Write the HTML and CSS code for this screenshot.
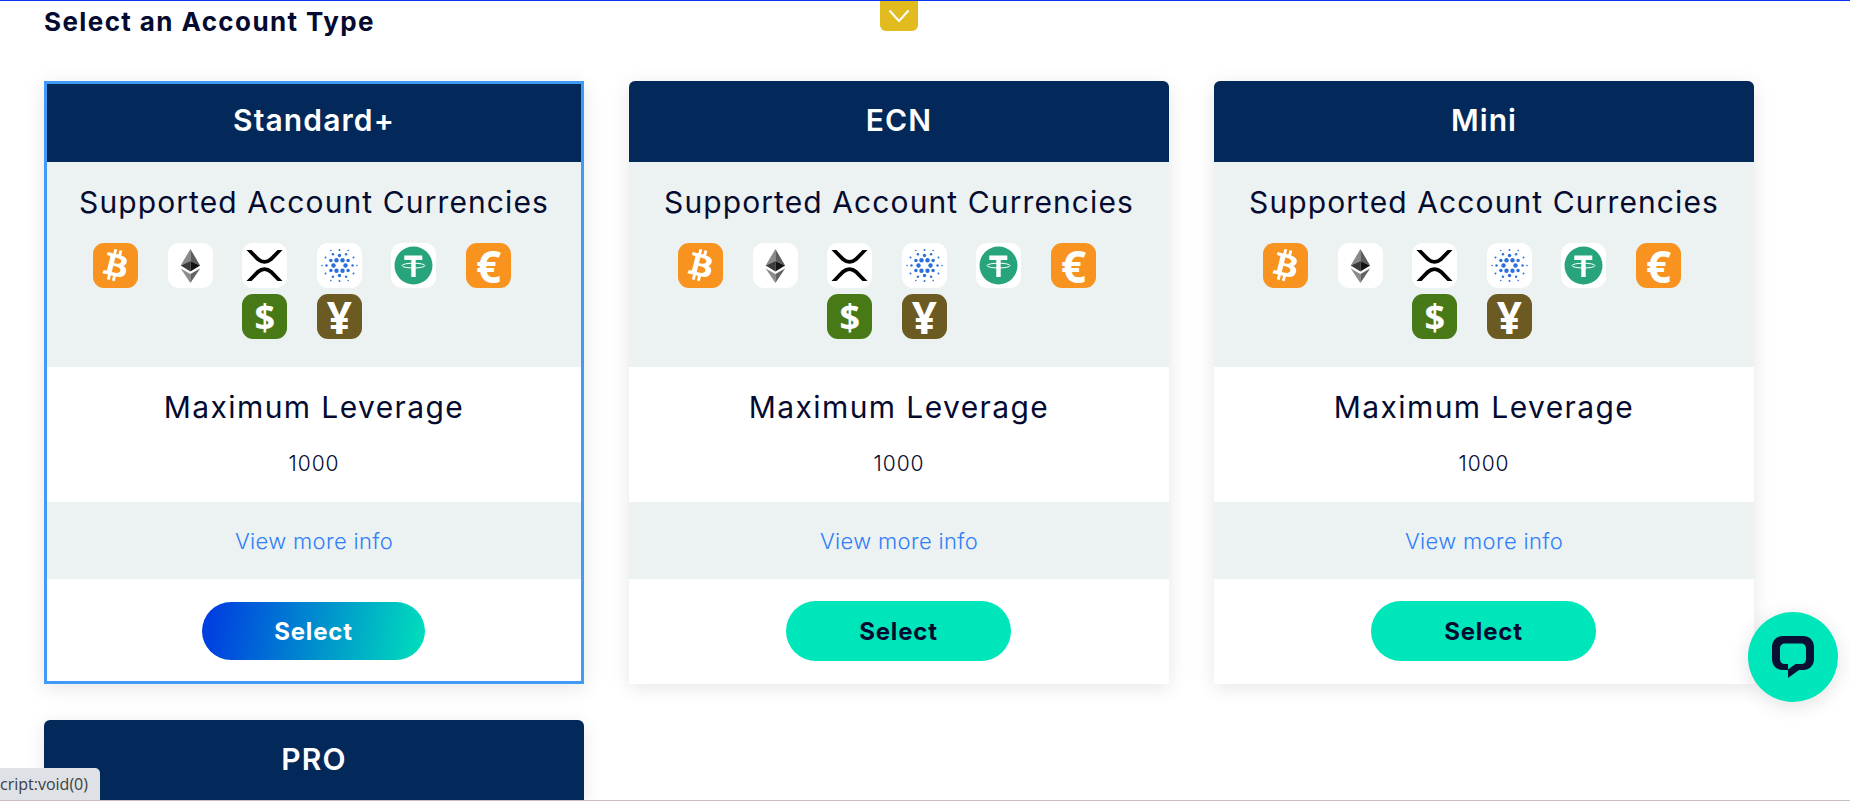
FILE: index.html
```html
<!DOCTYPE html>
<html lang="en">
  <head>
    <meta charset="UTF-8" />
    <meta name="viewport" content="width=device-width, initial-scale=1.0" />
    <title>Select an Account Type</title>
    <link rel="stylesheet" href="styles.css">
  </head>
  <body>
    <!-- Shared coin icons -->
    <svg class="icon-defs" aria-hidden="true">
      <symbol id="coin-btc" viewBox="0 0 64 64">
        <path fill="#fff" d="M46.11 27.441c.636-4.258-2.606-6.547-7.039-8.074l1.438-5.768-3.512-.875-1.4 5.616c-.922-.23-1.87-.447-2.812-.662l1.41-5.653-3.509-.875-1.439 5.766c-.764-.174-1.514-.346-2.242-.527l.004-.018-4.842-1.209-.934 3.75s2.605.597 2.55.634c1.422.355 1.68 1.296 1.636 2.042l-1.638 6.571c.098.025.225.061.365.117l-.371-.092-2.296 9.205c-.174.432-.615 1.08-1.609.834.035.051-2.552-.637-2.552-.637l-1.743 4.02 4.57 1.139c.85.213 1.683.436 2.502.646l-1.453 5.835 3.507.875 1.44-5.772c.957.26 1.887.5 2.797.726L27.504 50.8l3.511.875 1.453-5.823c5.987 1.133 10.49.676 12.383-4.738 1.527-4.36-.075-6.875-3.225-8.516 2.294-.531 4.022-2.04 4.483-5.157zM38.087 38.69c-1.086 4.36-8.426 2.004-10.807 1.412l1.928-7.729c2.38.594 10.011 1.77 8.88 6.317zm1.085-11.312c-.99 3.966-7.1 1.951-9.083 1.457l1.748-7.01c1.983.494 8.367 1.416 7.335 5.553z"/>
      </symbol>
      <symbol id="coin-eth" viewBox="0 0 45 45">
        <polygon fill="#8a8a8a" points="22.4,6 12.7,22.4 22.4,18"/>
        <polygon fill="#5c5c5c" points="22.4,6 32.1,22.4 22.4,18"/>
        <polygon fill="#3c3c3c" points="12.7,22.4 22.4,18 22.4,28.4"/>
        <polygon fill="#141414" points="32.1,22.4 22.4,18 22.4,28.4"/>
        <polygon fill="#8c8c8c" points="12.7,25.4 22.4,31 22.4,40"/>
        <polygon fill="#636363" points="32.1,25.4 22.4,31 22.4,40"/>
      </symbol>
      <symbol id="coin-xrp" viewBox="0 0 45 45">
        <path fill="#000" d="M4.500 7h5L17 14.500Q22.500 19.500 28 14.500L35.500 7h5L30.500 17.500Q22.500 24 14.500 17.500Z"/>
        <path fill="#000" d="M4.500 38h5L17 30.500Q22.500 25.500 28 30.500L35.500 38h5L30.500 27.500Q22.500 21 14.500 27.500Z"/>
      </symbol>
      <symbol id="coin-ada" viewBox="-22.5 -22.5 45 45">
        <g fill="#2a6fdb">
          <circle cx="-6" r="2.2"/><circle cx="6" r="2.2"/>
          <circle cx="-3" cy="-5.2" r="2.2"/><circle cx="3" cy="-5.2" r="2.2"/>
          <circle cx="-3" cy="5.2" r="2.2"/><circle cx="3" cy="5.2" r="2.2"/>
          <circle cy="-10" r="1.7"/><circle cy="10" r="1.7"/>
          <circle cx="-8.6" cy="-5" r="1.7"/><circle cx="8.6" cy="-5" r="1.7"/>
          <circle cx="-8.6" cy="5" r="1.7"/><circle cx="8.6" cy="5" r="1.7"/>
          <circle cx="-13" r="1.2"/><circle cx="13" r="1.2"/>
          <circle cx="-6.6" cy="-11.3" r="1.2"/><circle cx="6.6" cy="-11.3" r="1.2"/>
          <circle cx="-6.6" cy="11.3" r="1.2"/><circle cx="6.6" cy="11.3" r="1.2"/>
          <circle cy="-15.6" r="1"/><circle cy="15.6" r="1"/>
          <circle cx="-14" cy="-8" r="1"/><circle cx="14" cy="-8" r="1"/>
          <circle cx="-14" cy="8" r="1"/><circle cx="14" cy="8" r="1"/>
          <circle cx="-17.5" r=".8"/><circle cx="17.5" r=".8"/>
          <circle cx="-8.7" cy="-15" r=".8"/><circle cx="8.7" cy="-15" r=".8"/>
          <circle cx="-8.7" cy="15" r=".8"/><circle cx="8.7" cy="15" r=".8"/>
        </g>
      </symbol>
      <symbol id="coin-usdt" viewBox="0 0 45 45">
        <circle cx="22.5" cy="22.5" r="19" fill="#27a47c"/>
        <path fill="#fff" d="M13.3 12.500h18v4.600h-6.600V34h-4.400V17.100h-7z"/>
        <ellipse cx="22.5" cy="22.6" rx="11.5" ry="2.4" fill="none" stroke="#fff" stroke-width="1"/>
      </symbol>
    </svg>

    <main class="page">
      <h1 class="page-title">Select an Account Type</h1>

      <div class="card-grid">
        <!-- Standard+ (selected) -->
        <section class="card card-selected">
          <h2 class="card-head">Standard+</h2>
          <div class="card-currencies">
            <h3>Supported Account Currencies</h3>
            <ul class="coin-list">
              <li class="coin coin-orange"><svg class="coin-btc-svg"><use href="#coin-btc"/></svg></li>
              <li class="coin"><svg><use href="#coin-eth"/></svg></li>
              <li class="coin"><svg><use href="#coin-xrp"/></svg></li>
              <li class="coin"><svg><use href="#coin-ada"/></svg></li>
              <li class="coin"><svg><use href="#coin-usdt"/></svg></li>
              <li class="coin coin-orange coin-euro">€</li>
              <li class="coin coin-green">$</li>
              <li class="coin coin-brown">¥</li>
            </ul>
          </div>
          <div class="card-leverage">
            <h3>Maximum Leverage</h3>
            <p>1000</p>
          </div>
          <div class="card-info"><a href="#">View more info</a></div>
          <div class="card-action"><button class="select-btn">Select</button></div>
        </section>

        <!-- ECN -->
        <section class="card">
          <h2 class="card-head">ECN</h2>
          <div class="card-currencies">
            <h3>Supported Account Currencies</h3>
            <ul class="coin-list">
              <li class="coin coin-orange"><svg class="coin-btc-svg"><use href="#coin-btc"/></svg></li>
              <li class="coin"><svg><use href="#coin-eth"/></svg></li>
              <li class="coin"><svg><use href="#coin-xrp"/></svg></li>
              <li class="coin"><svg><use href="#coin-ada"/></svg></li>
              <li class="coin"><svg><use href="#coin-usdt"/></svg></li>
              <li class="coin coin-orange coin-euro">€</li>
              <li class="coin coin-green">$</li>
              <li class="coin coin-brown">¥</li>
            </ul>
          </div>
          <div class="card-leverage">
            <h3>Maximum Leverage</h3>
            <p>1000</p>
          </div>
          <div class="card-info"><a href="#">View more info</a></div>
          <div class="card-action"><button class="select-btn">Select</button></div>
        </section>

        <!-- Mini -->
        <section class="card">
          <h2 class="card-head">Mini</h2>
          <div class="card-currencies">
            <h3>Supported Account Currencies</h3>
            <ul class="coin-list">
              <li class="coin coin-orange"><svg class="coin-btc-svg"><use href="#coin-btc"/></svg></li>
              <li class="coin"><svg><use href="#coin-eth"/></svg></li>
              <li class="coin"><svg><use href="#coin-xrp"/></svg></li>
              <li class="coin"><svg><use href="#coin-ada"/></svg></li>
              <li class="coin"><svg><use href="#coin-usdt"/></svg></li>
              <li class="coin coin-orange coin-euro">€</li>
              <li class="coin coin-green">$</li>
              <li class="coin coin-brown">¥</li>
            </ul>
          </div>
          <div class="card-leverage">
            <h3>Maximum Leverage</h3>
            <p>1000</p>
          </div>
          <div class="card-info"><a href="#">View more info</a></div>
          <div class="card-action"><button class="select-btn">Select</button></div>
        </section>

        <!-- PRO, runs off the bottom of the window -->
        <section class="card">
          <h2 class="card-head">PRO</h2>
        </section>
      </div>
    </main>

    <!-- Things floating over the page -->
    <div class="top-line"></div>
    <a class="drop-tab" href="#" aria-label="Open">
      <svg width="22" height="14" viewBox="0 0 22 14"><path d="M1.500 1.500L11 12l9.500-10.500" fill="none" stroke="#fff" stroke-width="2"/></svg>
    </a>
    <div class="status-bubble">cript:void(0)</div>
    <div class="bottom-line"></div>
    <button class="chat-btn" aria-label="Chat">
      <svg width="42" height="42" viewBox="0 0 42 42">
        <path fill="#0a1033" d="M11 0h20c6.500 0 11 4.500 11 11v12c0 6.500-4.500 11-11 11h-4l-11 8v-8h-5C4.500 34 0 29.500 0 23V11C0 4.500 4.500 0 11 0z"/>
        <path fill="#00e6bb" d="M13 7.500h16c3 0 5 2 5 5V23c0 3-2 5-5 5h-5.500L16 33.500V28h-3c-3 0-5-2-5-5V12.500c0-3 2-5 5-5z"/>
      </svg>
    </button>
  </body>
</html>
```

FILE: styles.css
```css
/* General Styles */
html,
body {
  height: 801px;
  overflow: hidden;
}

body {
  font-family: Inter, "Liberation Sans", sans-serif;
  margin: 0;
  padding: 0;
  background-color: #fff;
  color: #050b30;
}

.icon-defs {
  display: none;
}

.page {
  padding: 0 44px;
}

.page-title {
  margin: 0;
  padding-top: 6px;
  font-size: 26px;
  line-height: 32px;
  font-weight: 700;
  letter-spacing: 1.4px;
}

/* Account cards */
.card-grid {
  display: grid;
  grid-template-columns: repeat(3, 540px);
  gap: 36px 45px;
  margin-top: 43px;
}

.card {
  box-sizing: border-box;
  border-radius: 6px 6px 0 0;
  overflow: hidden;
  background-color: #fff;
  box-shadow: 0 4px 20px rgba(0, 0, 0, 0.1);
  text-align: center;
}

.card-selected {
  border: 3px solid #429af8;
  border-radius: 0;
}

.card-head {
  display: flex;
  align-items: center;
  justify-content: center;
  height: 81px;
  box-sizing: border-box;
  margin: 0;
  padding-bottom: 3px;
  background-color: #03285a;
  color: #fff;
  font-size: 30px;
  font-weight: 600;
  letter-spacing: 1.1px;
}

.card-selected .card-head {
  height: 78px;
  padding-bottom: 6px;
}

.card h3 {
  margin: 0;
  font-size: 30px;
  line-height: 36px;
  font-weight: 400;
  letter-spacing: 1.1px;
}

.card-currencies {
  height: 205px;
  box-sizing: border-box;
  padding-top: 22px;
  background-color: #ecf1f2;
}

.coin-list {
  display: flex;
  flex-wrap: wrap;
  justify-content: center;
  gap: 6px 29.6px;
  margin: 23px 0 0;
  padding: 0 50px 0 26px;
  list-style: none;
}

.coin {
  display: flex;
  align-items: center;
  justify-content: center;
  width: 45px;
  height: 45px;
  border-radius: 11px;
  background-color: #fff;
  color: #fff;
  font-family: "Open Sans", sans-serif;
  font-weight: 700;
  line-height: 1;
}

.coin svg {
  width: 45px;
  height: 45px;
  flex-shrink: 0;
}

.coin .coin-btc-svg {
  width: 51px;
  height: 51px;
}

.coin-orange {
  background-color: #f7931e;
}

.coin-euro {
  font-size: 44px;
}

.coin-green {
  background-color: #477a17;
  font-size: 36px;
}

.coin-brown {
  background-color: #6b5a22;
  font-size: 44px;
}

.card-leverage {
  height: 135px;
  box-sizing: border-box;
  padding-top: 22px;
}

.card-leverage h3 {
  letter-spacing: 1.4px;
}

.card-leverage p {
  margin: 27px 0 0;
  font-size: 21px;
  line-height: 24px;
  font-weight: 300;
  letter-spacing: 0.9px;
}

.card-info {
  display: flex;
  align-items: center;
  justify-content: center;
  height: 77px;
  background-color: #ecf1f2;
}

.card-info a {
  color: #2f7ff8;
  font-size: 22px;
  font-weight: 300;
  letter-spacing: 0.35px;
  text-decoration: none;
}

.card-action {
  height: 105px;
  box-sizing: border-box;
  padding-top: 22px;
}

.card-selected .card-action {
  height: 102px;
  padding-top: 23px;
}

.select-btn {
  width: 225px;
  height: 60px;
  margin-right: 1px;
  border: none;
  border-radius: 30px;
  background-color: #00e6bb;
  color: #050b30;
  font-family: inherit;
  font-size: 24px;
  font-weight: 700;
  letter-spacing: 0.8px;
}

.card-selected .select-btn {
  width: 223px;
  height: 58px;
  background: linear-gradient(100deg, #0040e0 5%, #00e0bb 100%);
  color: #fff;
}

/* Floating bits */
.top-line {
  position: fixed;
  top: 0;
  left: 0;
  right: 0;
  height: 1px;
  background-color: #0a34f0;
}

.bottom-line {
  position: fixed;
  bottom: 0;
  left: 0;
  right: 0;
  height: 1px;
  background-color: #c9bcc6;
}

.drop-tab {
  position: fixed;
  top: 1px;
  left: 880px;
  display: flex;
  align-items: center;
  justify-content: center;
  width: 38px;
  height: 30px;
  border-radius: 0 0 6px 6px;
  background-color: #e2bb1f;
}

.status-bubble {
  position: fixed;
  left: 0;
  bottom: 1px;
  width: 100px;
  height: 32px;
  box-sizing: border-box;
  padding-right: 15px;
  border-radius: 0 5px 0 0;
  background-color: #dee1e6;
  color: #3c4043;
  font-family: "Open Sans", sans-serif;
  font-size: 16px;
  line-height: 32px;
  text-align: right;
  white-space: nowrap;
}

.chat-btn {
  position: fixed;
  left: 1748px;
  top: 612px;
  display: flex;
  align-items: center;
  justify-content: center;
  width: 90px;
  height: 90px;
  padding: 0;
  border: none;
  border-radius: 50%;
  background-color: #00e6bb;
  box-shadow: 0 4px 20px rgba(0, 0, 0, 0.12);
}
```
